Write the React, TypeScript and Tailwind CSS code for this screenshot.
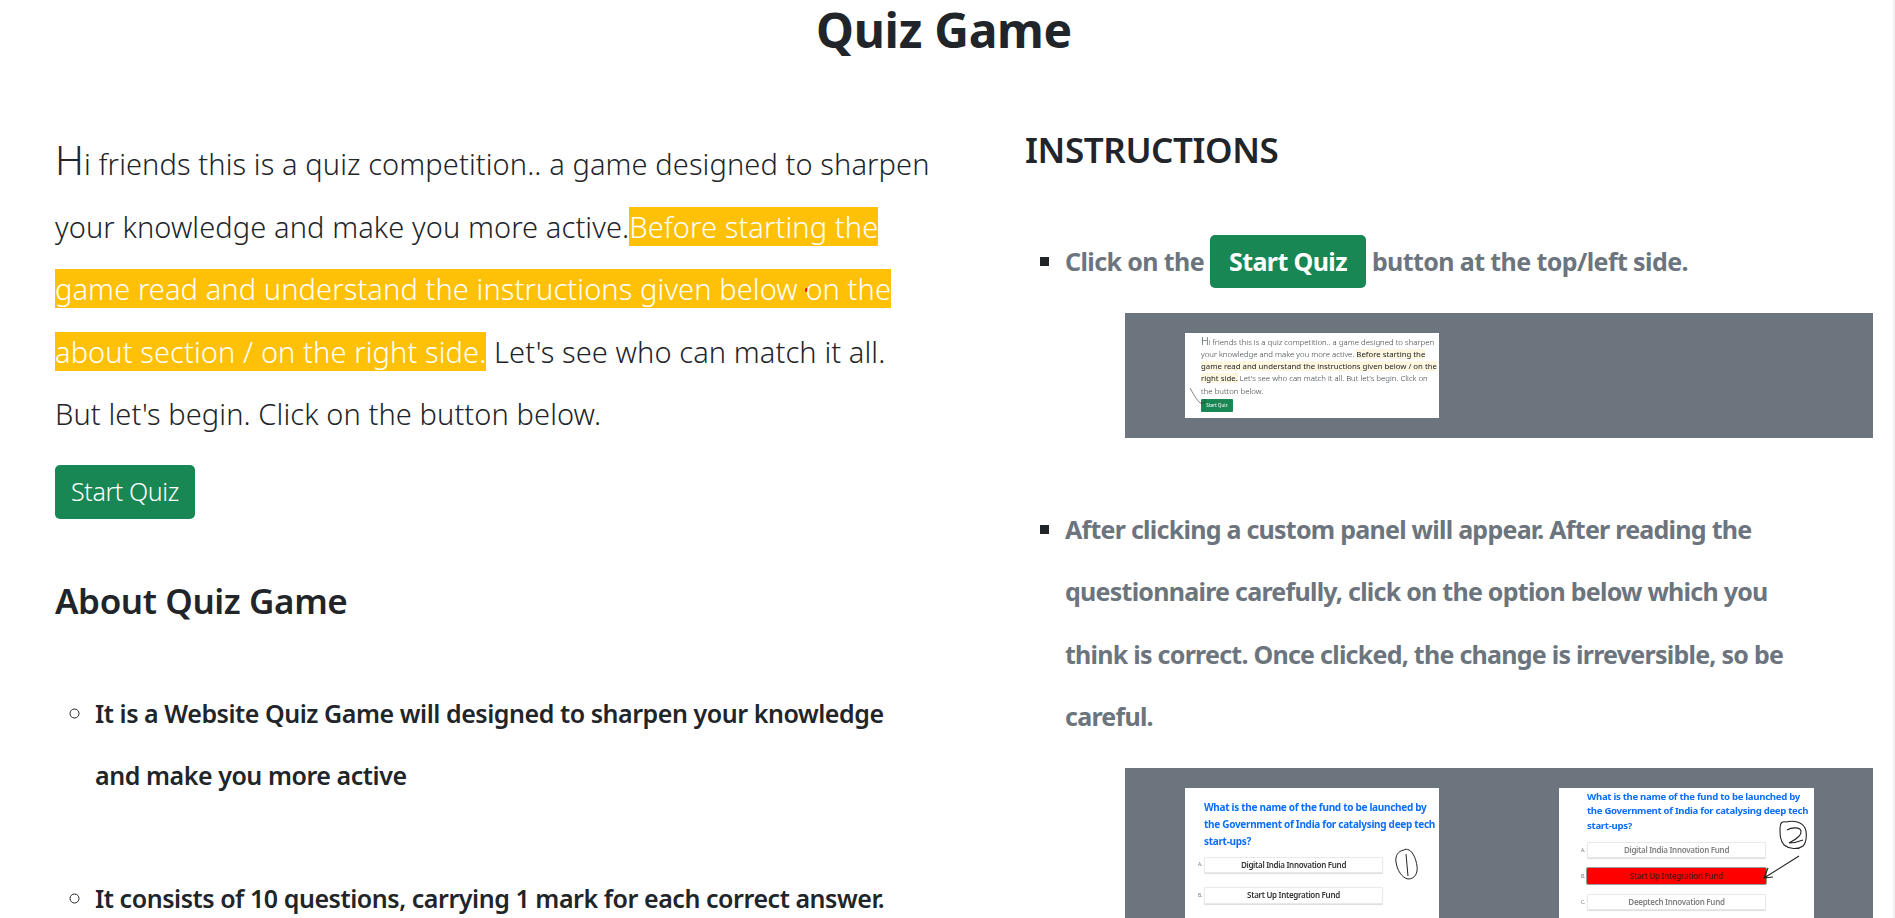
const font = { fontFamily: '"Noto Sans", "Open Sans", sans-serif' }

function MiniIntro() {
  return (
    <div className="relative my-[20px] ml-[60px] h-[85px] w-[254px] bg-white pl-[16px] pt-[2px] text-[7.8px] leading-[12.3px] tracking-normal text-[#343a40] blur-[0.3px]">
      <div className="w-[237px] font-light">
        <span className="text-[10.5px]">H</span>i friends this is a quiz competition.. a game designed to sharpen your knowledge and make you more active.{' '}
        <span className="bg-[#fff6df] font-normal text-[#212529]">Before starting the game read and understand the instructions given below / on the right side.</span>{' '}
        Let's see who can match it all. But let's begin. Click on the button below.
      </div>
      <div className="mt-[2px] flex h-[13px] w-[32px] items-center justify-center rounded-[1px] bg-[#198754] text-[4.6px] font-normal leading-none text-white">Start Quiz</div>
      <svg className="absolute left-[4px] top-[54px]" width="20" height="22" viewBox="0 0 20 22" fill="none" stroke="#333" strokeWidth="0.6">
        <path d="M1 1 C4 6 6 11 11 16 L16 16 L16 12" />
      </svg>
    </div>
  )
}

function Option({ label, text, red, dim, h }: { label: string; text: string; red?: boolean; dim?: boolean; h: string }) {
  return (
    <div className="flex items-center leading-none">
      <span className="w-[19px] pr-[2px] text-right text-[5px] font-normal text-[#777]">{label}</span>
      <div className={`flex ${h} w-[179px] items-center justify-center rounded-[1px] text-[8px] font-semibold ${red ? 'bg-[#ff0000] text-[#5a1010] shadow-[0_0_0_1px_#9a9a9a]' : 'border border-[#e9e9e9] bg-white shadow-[0_1px_1px_#ddd]'} ${dim ? 'text-[#808080]' : ''} ${!red && !dim ? 'text-[#333]' : ''}`}>
        {text}
      </div>
    </div>
  )
}

function MiniQuestionOne() {
  return (
    <div className="relative my-[20px] ml-[60px] h-[200px] w-[254px] shrink-0 bg-white tracking-[-0.3px] blur-[0.3px]">
      <div className="w-[252px] pl-[19px] pt-[11px] text-[10px] font-bold leading-[17px] text-[#0d6efd]">
        What is the name of the fund to be launched by the Government of India for catalysing deep tech start-ups?
      </div>
      <div className="mt-[7px] flex flex-col gap-[14px]">
        <Option label="A." text="Digital India Innovation Fund" h="h-[16px]" />
        <Option label="B." text="Start Up Integration Fund" h="h-[17px]" />
      </div>
      <svg className="absolute left-[209px] top-[60px]" width="26" height="34" viewBox="0 0 26 34" fill="none" stroke="#222" strokeWidth="1">
        <path d="M10 2 C4 3 1 8 2 14 C3 22 8 30 14 31 C21 31 24 25 23 18 C22 11 19 4 15 2 C13 1 11 1 10 2" />
        <path d="M12 6 L14 28" />
      </svg>
    </div>
  )
}

function MiniQuestionTwo() {
  return (
    <div className="relative my-[20px] ml-[120px] h-[200px] w-[255px] shrink-0 bg-white tracking-[-0.3px] blur-[0.3px]">
      <div className="w-[254px] pl-[28px] pt-[2px] text-[9.6px] font-bold leading-[14.6px] text-[#0d6efd]">
        What is the name of the fund to be launched by the Government of India for catalysing deep tech start-ups?
      </div>
      <div className="mt-[9px] flex flex-col gap-[10px] pl-[9px]">
        <Option label="A." text="Digital India Innovation Fund" dim h="h-[16px]" />
        <Option label="B." text="Start Up Integration Fund" red h="h-[16px]" />
        <Option label="C." text="Deeptech Innovation Fund" dim h="h-[16px]" />
      </div>
      <svg className="absolute left-[203px] top-[32px]" width="48" height="66" viewBox="0 0 48 66" fill="none" stroke="#222" strokeWidth="1.1">
        <path d="M24 2 C20 1 18 3 18 8 C18 15 18 20 22 25 C27 29 36 30 41 26 C45 22 45 12 43 8 C40 2 32 0 24 2" />
        <path d="M25 10 C30 7 38 7 39 11 C40 16 33 20 27 23 C31 23 36 22 41 20" />
        <path d="M37 36 L2 58 M2 58 L6 48 M2 58 L11 57" />
      </svg>
    </div>
  )
}

export default function App() {
  return (
    <div className="h-[918px] w-full overflow-hidden border-r-2 border-[#f1f1f1] bg-white text-[#212529]" style={font}>
      {/* Title */}
      <div className="flex h-[128px] justify-center pr-[5px] pt-[1px]">
        <h1 className="text-[48px] font-bold leading-[58px] tracking-[-0.3px]">Quiz Game</h1>
      </div>

      <div className="grid grid-cols-[970px_1fr]">
        {/* Left side */}
        <div className="pl-[55px] pr-[37px] pt-[5px]">
          <p className="text-[29px] font-light leading-[62.5px] tracking-[0.1px]">
            <span className="text-[40px] leading-none">H</span>i friends this is a quiz competition.. a game designed to sharpen your knowledge and make you more active.
            <span className="bg-[#ffc107] text-white">
              Before starting the game read and understand the instructions given below{' '}
              <span className="-mr-[3px] inline-block h-[4px] w-[3px] rounded-full bg-[#ff0000] align-[8px]" />
              on the about section / on the right side.
            </span>{' '}
            Let's see who can match it all. But let's begin. Click on the button below.
          </p>
          <button className="mt-[19px] h-[54px] w-[140px] rounded-[5px] bg-[#198754] text-[25px] font-light tracking-[-0.4px] text-white">Start Quiz</button>

          <h2 className="mt-[60px] text-[35px] font-semibold leading-[43px] tracking-[-0.4px]">About Quiz Game</h2>
          <ul className="mt-[60px] list-[circle] pl-[40px] pr-[20px] text-[25px] font-semibold leading-[62.5px] tracking-[-0.45px]">
            <li className="mb-[60px]">It is a Website Quiz Game will designed to sharpen your knowledge and make you more active</li>
            <li className="mb-[60px]">It consists of 10 questions, carrying 1 mark for each correct answer.</li>
          </ul>
        </div>

        {/* Right side */}
        <div className="pl-[55px] pr-[20px]">
          <h2 className="text-[35px] font-semibold leading-[43px] tracking-[-0.4px]">INSTRUCTIONS</h2>
          <ul className="mt-[59px] list-[square] pl-[40px] text-[25px] font-bold leading-[62.5px] tracking-[-0.6px] text-[#6c757d] marker:text-[#212529]">
            <li className="mb-[60px]">
              Click on the{' '}
              <button className="inline-block h-[53px] w-[156px] rounded-[5px] bg-[#198754] text-[25px] font-bold leading-none tracking-[-0.6px] text-white">Start Quiz</button>{' '}
              button at the top/left side.
              <div className="ml-[60px] mt-[20px] flex bg-[#6c757d]">
                <MiniIntro />
              </div>
            </li>
            <li>
              <div className="pr-[60px] tracking-[-0.75px]">
                After clicking a custom panel will appear. After reading the questionnaire carefully, click on the option below which you think is correct. Once clicked, the change is irreversible, so be careful.
              </div>
              <div className="ml-[60px] mt-[20px] flex bg-[#6c757d]">
                <MiniQuestionOne />
                <MiniQuestionTwo />
              </div>
            </li>
          </ul>
        </div>
      </div>
    </div>
  )
}
